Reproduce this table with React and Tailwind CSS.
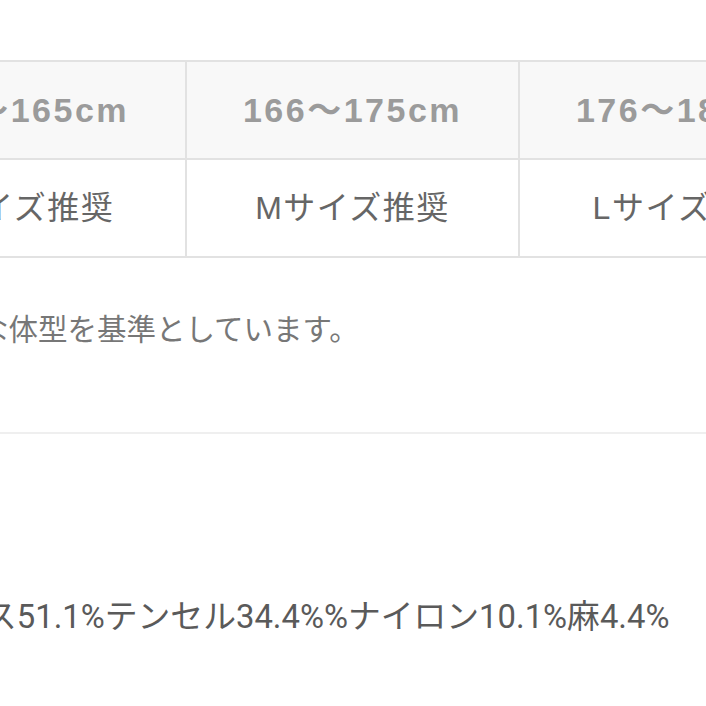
export default function App() {
  const heads = ["155〜165cm", "166〜175cm", "176〜185cm", "186〜195cm"];
  const recs = ["Sサイズ推奨", "Mサイズ推奨", "Lサイズ推奨", "XLサイズ推奨"];
  return (
    <div className="w-[706px] h-[706px] overflow-hidden bg-white">
      <div className="pt-[60px] -ml-[148px]">
        <div className="grid grid-cols-[repeat(4,333px)] w-max border-t-2 border-l-2 border-[#e2e2e2]">
          {heads.map((h) => (
            <div
              key={h}
              className="h-[98px] bg-[#f8f8f8] border-r-2 border-b-2 border-[#e2e2e2] flex items-center justify-center font-bold text-[34px] tracking-[2.5px] text-[#9b9b9b] font-['Liberation_Sans','Noto_Sans_CJK_JP',sans-serif]"
            >
              {h}
            </div>
          ))}
          {recs.map((r) => (
            <div
              key={r}
              className="h-[98px] bg-white border-r-2 border-b-2 border-[#e2e2e2] flex items-center justify-center text-[32px] tracking-[1.5px] text-[#666] font-['Liberation_Sans','Noto_Sans_CJK_JP',sans-serif]"
            >
              {r}
            </div>
          ))}
        </div>
      </div>
      <p className="mt-[49px] h-[40px] leading-[40px] -ml-[21px] whitespace-nowrap text-[29.5px] text-[#777] font-['Noto_Sans_CJK_JP',sans-serif]">
        な体型を基準としています。
      </p>
      <div className="mt-[85px] h-[2px] bg-[#efefef]" />
      <p className="mt-[163px] h-[40px] leading-[40px] -ml-[16px] whitespace-nowrap text-[32.8px] text-[#5a5a5a] font-['Roboto','Noto_Sans_CJK_JP',sans-serif]">
        ス51.1%テンセル34.4%%ナイロン10.1%麻4.4%
      </p>
    </div>
  );
}
